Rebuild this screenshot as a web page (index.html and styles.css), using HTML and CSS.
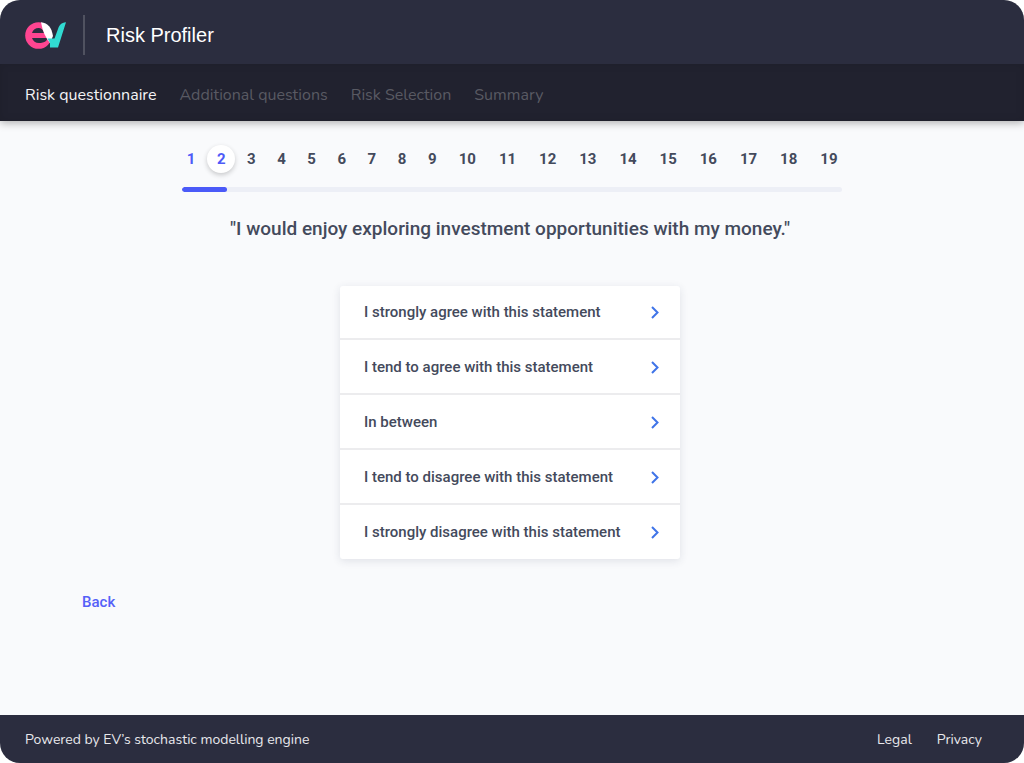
FILE: index.html
```html
<!DOCTYPE html>
<html lang="en">
<head>
	<meta charset="utf-8">
	<meta name="viewport" content="width=device-width, initial-scale=1.0">
	<title>Risk Profiler</title>
	<link rel="stylesheet" href="styles.css">
</head>
<body>
<div class="app">
	<header class="header">
		<div class="brand">
			<svg class="logo" viewBox="0 0 41 27" role="img" aria-label="EV">
				<circle cx="13.5" cy="13.5" r="13.3" fill="#ff4591"/>
				<path d="M7 11C8 7.500 10.500 6 13.500 6s4.500 1.500 5.500 5z" fill="#2b2d3f"/>
				<path d="M7 16h16l-2 3c-2 1.500-4.500 2-7 2C10.500 21 8 19 7 16z" fill="#2b2d3f"/>
				<path d="M16 0.300C23 1 26.500 5.500 28 14L25 21C20.500 16 17.500 9 16 0.300z" fill="#fff"/>
				<path d="M41 0.200C36 0.500 34.500 3 33 7l-3.500 9.500H22.500L25 21v4.500h8z" fill="#31dbd2"/>
			</svg>
			<h1 class="title">Risk Profiler</h1>
		</div>
		<nav class="tabs">
			<a href="#" class="tab active" aria-current="page">Risk questionnaire</a>
			<a href="#" class="tab">Additional questions</a>
			<a href="#" class="tab">Risk Selection</a>
			<a href="#" class="tab">Summary</a>
		</nav>
	</header>

	<main class="main">
		<div class="progress">
			<nav class="steps" aria-label="Questions">
				<a href="#" class="step done">1</a>
				<a href="#" class="step current">2</a>
				<a href="#" class="step">3</a>
				<a href="#" class="step">4</a>
				<a href="#" class="step">5</a>
				<a href="#" class="step">6</a>
				<a href="#" class="step">7</a>
				<a href="#" class="step">8</a>
				<a href="#" class="step">9</a>
				<a href="#" class="step wide">10</a>
				<a href="#" class="step wide">11</a>
				<a href="#" class="step wide">12</a>
				<a href="#" class="step wide">13</a>
				<a href="#" class="step wide">14</a>
				<a href="#" class="step wide">15</a>
				<a href="#" class="step wide">16</a>
				<a href="#" class="step wide">17</a>
				<a href="#" class="step wide">18</a>
				<a href="#" class="step wide">19</a>
			</nav>
			<div class="bar"><div class="bar-fill" style="width: 6.8%"></div></div>
		</div>

		<section class="question">
			<h2 class="statement">"I would enjoy exploring investment opportunities with my money."</h2>
			<div class="answers">
				<button type="button" class="answer">I strongly agree with this statement
					<svg class="chevron" viewBox="0 0 9 14"><path d="M1 2l5.500 5.500L1 13"/></svg></button>
				<button type="button" class="answer">I tend to agree with this statement
					<svg class="chevron" viewBox="0 0 9 14"><path d="M1 2l5.500 5.500L1 13"/></svg></button>
				<button type="button" class="answer">In between
					<svg class="chevron" viewBox="0 0 9 14"><path d="M1 2l5.500 5.500L1 13"/></svg></button>
				<button type="button" class="answer">I tend to disagree with this statement
					<svg class="chevron" viewBox="0 0 9 14"><path d="M1 2l5.500 5.500L1 13"/></svg></button>
				<button type="button" class="answer">I strongly disagree with this statement
					<svg class="chevron" viewBox="0 0 9 14"><path d="M1 2l5.500 5.500L1 13"/></svg></button>
			</div>
		</section>
		<a href="#" class="back">Back</a>
	</main>

	<footer class="footer">
		<span>Powered by EV’s stochastic modelling engine</span>
		<nav class="footer-links">
			<a href="#">Legal</a>
			<a href="#">Privacy</a>
		</nav>
	</footer>
</div>
</body>
</html>
```
FILE: styles.css
```css
* { box-sizing: border-box; }

body {
	margin: 0;
	background: #fff;
	color: #444a5c;
	font-family: Roboto, sans-serif;
}

a { color: inherit; text-decoration: none; }

.app {
	display: flex;
	flex-direction: column;
	min-height: 100vh;
	background: #f9fafc;
	border-radius: 20px;
	overflow: hidden;
}

/* header */
.header {
	background: #2b2d3f;
	color: #fff;
	box-shadow: 0 2px 8px rgba(0, 0, 0, 0.3);
}

.brand {
	display: flex;
	align-items: center;
	height: 64px;
	padding: 6px 25px 0;
}

.logo { width: 41px; height: 27px; }

.title {
	margin: 0 0 0 17px;
	padding-left: 21px;
	border-left: 2px solid #505260;
	font: 20px/40px "Liberation Sans", Arial, sans-serif;
}

.tabs {
	display: flex;
	gap: 23px;
	padding: 19px 25px 14px;
	background: #21222f;
	box-shadow: inset 0 0 8px rgba(0, 0, 0, 0.1);
	font: 16px/24px Nunito, Lato, sans-serif;
}

.tab { color: #595a63; }
.tab.active { color: #f4f4f6; }

/* question progress */
.main { flex: 1; padding: 24px 82px; }

.progress { max-width: 660px; margin: 0 auto; }

.steps {
	display: flex;
	margin: 0 -7px 0 -6px;
	font-size: 15px;
	font-weight: 700;
	line-height: 28px;
	text-align: center;
}

.step { flex: 3 1 0; position: relative; z-index: 0; }
.step.wide { flex-grow: 4; }
.step.done, .step.current { color: #4f5bf8; }

.step.current::before {
	content: "";
	position: absolute;
	z-index: -1;
	top: 0;
	left: 50%;
	width: 28px;
	height: 28px;
	margin-left: -14px;
	border-radius: 50%;
	background: #fff;
	box-shadow: 0 2px 5px rgba(0, 0, 0, 0.2);
}

.bar {
	height: 5px;
	margin-top: 14px;
	border-radius: 3px;
	background: #edeff6;
	overflow: hidden;
}

.bar-fill { height: 100%; border-radius: 3px; background: #4b5af8; }

/* statement and answers */
.question { padding-right: 4px; }

.statement {
	margin: 24px 0 45px;
	font-size: 19px;
	font-weight: 500;
	line-height: 25px;
	text-align: center;
}

.answers {
	max-width: 340px;
	margin: 0 auto;
	border-radius: 3px;
	background: #fff;
	box-shadow: 0 2px 8px rgba(40, 50, 80, 0.12);
}

.answer {
	display: flex;
	align-items: center;
	justify-content: space-between;
	width: 100%;
	height: 55px;
	padding: 0 20px 0 24px;
	border: 0;
	border-bottom: 2px solid #ececee;
	background: none;
	color: inherit;
	font: 500 15px/20px Roboto, sans-serif;
	text-align: left;
	cursor: pointer;
}

.answer:first-child { height: 54px; }
.answer:last-child { height: 54px; border-bottom: 0; }

.chevron {
	width: 9px;
	height: 14px;
	fill: none;
	stroke: #3f74e8;
	stroke-width: 2;
}

.back {
	display: inline-block;
	margin-top: 33px;
	color: #5560f8;
	font-size: 15px;
	font-weight: 500;
	line-height: 20px;
}

/* footer */
.footer {
	display: flex;
	align-items: center;
	justify-content: space-between;
	height: 48px;
	padding: 2px 42px 0 25px;
	background: #2b2d3f;
	color: #e8e8ec;
	font: 14px/20px Nunito, Lato, sans-serif;
}

.footer-links { display: flex; gap: 25px; }
```
